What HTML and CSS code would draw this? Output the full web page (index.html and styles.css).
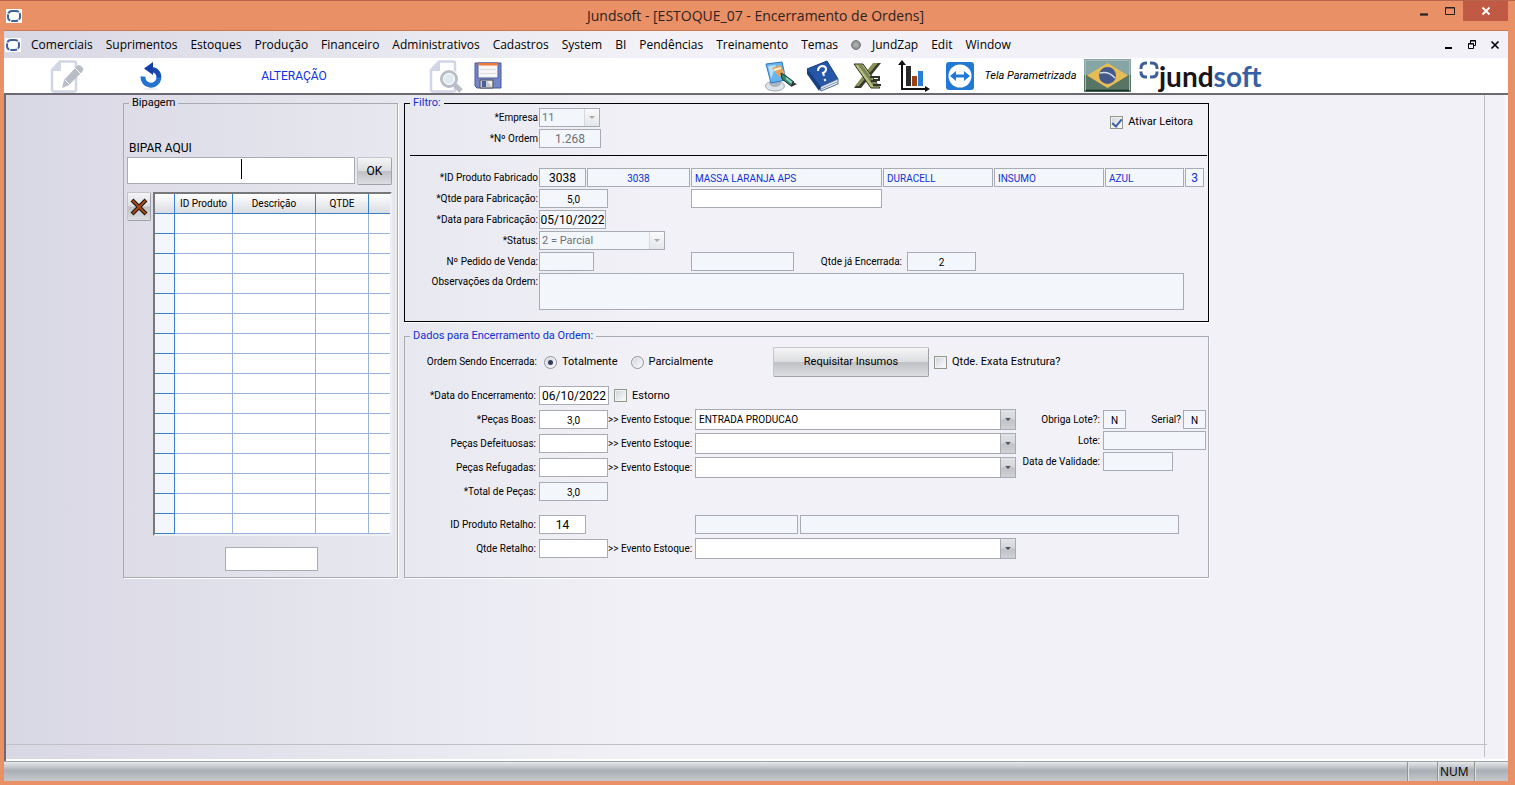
FILE: index.html
```html
<!DOCTYPE html>
<html lang="pt-BR">
<head>
<meta charset="utf-8">
<title>Jundsoft - [ESTOQUE_07 - Encerramento de Ordens]</title>
<link rel="stylesheet" href="styles.css">
</head>
<body>
<div class="window">
  <header class="titlebar">
    <svg class="app-icon" viewBox="0 0 16 14"><rect width="16" height="14" fill="#fff"/><rect x="2" y="2" width="12" height="10" rx="4" fill="none" stroke="#3d6199" stroke-width="2" stroke-dasharray="7 1"/></svg>
    <h1 class="title">Jundsoft - [ESTOQUE_07 - Encerramento de Ordens]</h1>
    <div class="window-buttons">
      <button class="win-btn" aria-label="Minimizar"><svg width="10" height="12"><path d="M1 9.500h8" stroke="#222" stroke-width="2.200"/></svg></button>
      <button class="win-btn" aria-label="Maximizar"><svg width="12" height="12"><path d="M1.500 2.500h9v7h-9zM1.500 3h9" fill="none" stroke="#222"/></svg></button>
      <button class="win-btn win-close" aria-label="Fechar"><svg width="10" height="10"><path d="M1.500 1.500l7 7m0-7l-7 7" stroke="#fff" stroke-width="1.800"/></svg></button>
    </div>
  </header>

  <nav class="menubar">
    <svg class="app-icon" viewBox="0 0 16 14"><rect width="16" height="14" fill="#fff"/><rect x="2" y="2" width="12" height="10" rx="4" fill="none" stroke="#3d6199" stroke-width="2" stroke-dasharray="7 1"/></svg>
    <div class="menu-items">
      <button class="menu">Comerciais</button>
      <button class="menu">Suprimentos</button>
      <button class="menu">Estoques</button>
      <button class="menu">Produção</button>
      <button class="menu">Financeiro</button>
      <button class="menu">Administrativos</button>
      <button class="menu">Cadastros</button>
      <button class="menu">System</button>
      <button class="menu">BI</button>
      <button class="menu">Pendências</button>
      <button class="menu">Treinamento</button>
      <button class="menu">Temas</button>
      <button class="menu menu-zap"><span class="dot"></span>JundZap</button>
      <button class="menu">Edit</button>
      <button class="menu">Window</button>
    </div>
    <div class="mdi-buttons">
      <button class="mdi-btn" aria-label="Minimizar janela"><svg width="10" height="10"><path d="M1 8h7" stroke="#000" stroke-width="2"/></svg></button>
      <button class="mdi-btn" aria-label="Restaurar janela"><svg width="10" height="10"><path d="M1.500 3.500h5v5h-5zM1 4h6M3.500 3V.5h5v5H7M3 1h6" fill="none" stroke="#000"/></svg></button>
      <button class="mdi-btn" aria-label="Fechar janela"><svg width="10" height="10"><path d="M1.500 1.500l7 7m0-7l-7 7" stroke="#000" stroke-width="1.600"/></svg></button>
    </div>
  </nav>

  <div class="toolbar">
    <button class="tool tool-edit" aria-label="Editar"><svg width="34" height="34" viewBox="0 0 34 34"><path d="M10 2.500h14q2 0 2 2v26q0 2-2 2H4q-2 0-2-2V11z" fill="#fff" stroke="#d1d6e7" stroke-width="2.500"/><path d="M2 12L11 2v10z" fill="#d1d6e7"/><path d="M27 7q2-2 4 0l2 2q1 2-1 4L19 26l-7 3 2-8z" fill="#b8bdc6"/><path d="M25 9l6 6M15 21l4 4" stroke="#fff"/></svg></button>
    <button class="tool tool-undo" aria-label="Desfazer"><svg width="24" height="30" viewBox="0 0 24 30"><path d="M4 15.500a8 8 0 1 0 10-7" fill="none" stroke="#2374cf" stroke-width="5"/><path d="M13 8.500q7 1 7 8" fill="none" stroke="#1b4cad" stroke-width="4.500"/><path d="M5 7.500L14 1v13z" fill="#173ea8"/><ellipse cx="12" cy="28" rx="8" ry="1" fill="#eee"/></svg></button>
    <span class="mode">ALTERAÇÃO</span>
    <button class="tool tool-search" aria-label="Pesquisar"><svg width="34" height="34" viewBox="0 0 34 34"><path d="M10 2.500h14q2 0 2 2v26q0 2-2 2H4q-2 0-2-2V11z" fill="#fff" stroke="#d1d6e7" stroke-width="2.500"/><path d="M2 12L11 2v10z" fill="#d1d6e7"/><circle cx="20" cy="20" r="10" fill="#fff"/><circle cx="20" cy="20" r="7.500" fill="#dfeaf1" stroke="#b8bdc6" stroke-width="3"/><circle cx="20" cy="20" r="5.500" fill="none" stroke="#fff"/><path d="M26 26l6 6" stroke="#b8bdc6" stroke-width="5"/></svg></button>
    <button class="tool tool-save" aria-label="Salvar"><svg width="28" height="30" viewBox="0 0 28 30"><path d="M1 2h26v25H3l-2-2z" fill="#7586c6" stroke="#44589e"/><path d="M4 2h20v15H4z" fill="#f6f6f6" stroke="#4c5c99"/><path d="M4.500 2h19v2.500h-19z" fill="#f07838"/><path d="M6 8.500h16M6 12.500h16" stroke="#ddd"/><path d="M6 19h13v8H6z" fill="#c5c9d2" stroke="#555"/><path d="M8 20h4v6H8z" fill="#4a5f9c"/><path d="M13 20l5 6v-6z" fill="#eee"/></svg></button>
    <button class="tool tool-login" aria-label="Usuário"><svg width="34" height="32" viewBox="0 0 34 32"><ellipse cx="11" cy="26" rx="9.500" ry="5" fill="#dfe3ea" stroke="#9ea8b5"/><ellipse cx="11" cy="23" rx="6" ry="4" fill="#aab5c4"/><path d="M2 4l16-2 4 18-15 3z" fill="#67b5ee" stroke="#2c75be"/><path d="M4 6l8-1-5 14z" fill="#b8e0fb"/><path d="M8 8l8-3 5 8-6 4z" fill="#e5a25f"/><path d="M10 10l7-2" stroke="#fff0c4" stroke-width="2"/><path d="M17 13l5 3 8 6-3 4-9-7z" fill="#3b8172" stroke="#173d38"/><path d="M22 18l6 5" stroke="#88d5bd" stroke-width="2"/><path d="M28 22l5 2-6 3z" fill="#333"/></svg></button>
    <button class="tool tool-help" aria-label="Ajuda"><svg width="34" height="34" viewBox="0 0 34 34"><path d="M1 10L21 2l11 18-18 8z" fill="#2556a9" stroke="#173d7c"/><path d="M14 28l18-8v5l-17 7z" fill="#e8ebf1" stroke="#507095"/><path d="M1 10v5l12 17 2-4z" fill="#173f82"/><path d="M15 30l16-7" stroke="#8095b0"/><path d="M12 12q0-4 4-5 4 0 4 3 0 3-3 4l1 3M18.500 20l1 2" fill="none" stroke="#fff" stroke-width="2"/></svg></button>
    <button class="tool tool-excel" aria-label="Exportar para Excel"><svg width="30" height="28" viewBox="0 0 30 28"><path d="M21 1h7L8 26H1z" fill="#35392a"/><path d="M20 1h5L6 24H2z" fill="#8a8e59"/><path d="M1 2h9l17 24h-9z" fill="#b9bd78" stroke="#292d20"/><path d="M5 3h4l16 22h-4z" fill="#77865a"/><path d="M17 15h9v3h-6M18 19h6M20 23h8" stroke="#30352a" stroke-width="2" fill="none"/></svg></button>
    <button class="tool tool-chart" aria-label="Gráficos"><svg width="32" height="32" viewBox="0 0 32 32"><path d="M4 3v26h25" fill="none" stroke="#111" stroke-width="2"/><path d="M0 5l4-5 4 5zM27 26l5 3-5 3z" fill="#111"/><path d="M8 6h5v20H8z" fill="#29292b"/><path d="M14 16h5v10h-5z" fill="#9c4217"/><path d="M20 11h5v15h-5z" fill="#2780d5"/></svg></button>
    <button class="tool tool-remote" aria-label="Acesso remoto"><svg width="28" height="28" viewBox="0 0 28 28"><rect width="28" height="28" rx="3" fill="#2279d3"/><circle cx="14" cy="14" r="11.500" fill="#fff"/><path d="M4 14l6-5v3.500h8V9l6 5-6 5v-3.500h-8V19z" fill="#2279d3"/></svg></button>
    <em class="param">Tela Parametrizada</em>
    <button class="tool tool-flag" aria-label="Português do Brasil"><svg width="47" height="33" viewBox="0 0 47 33"><rect width="47" height="33" fill="#587465"/><path d="M0 0h47v16H0z" fill="#86a5a4"/><path d="M1.500 31V1.500h44V31" fill="none" stroke="#a9b9b5"/><path d="M2 31.500h43" stroke="#142b20" stroke-width="1.500"/><path d="M3 16.500L23.500 4 44 16.500 23.500 29z" fill="#e6bd55"/><circle cx="23.500" cy="16.500" r="8.500" fill="#44598b"/><path d="M16 14q9-2 15 5" stroke="#d8dce8" stroke-width="1.500" fill="none"/></svg></button>
    <a class="logo" href="#"><svg width="20" height="20" viewBox="0 0 20 20"><path d="M2 8V7q0-5 5-5h1M11 2h2q5 0 5 5v1M18 10.500v1q0 4.500-5 4.500h-2M8 16H7q-5 0-5-4.500v-1" fill="none" stroke="#3c5f9b" stroke-width="3"/></svg><span class="brand">jund<span class="brand-soft">soft</span></span></a>
  </div>

  <main class="workspace">
    <div class="content">
      <fieldset class="panel scan">
        <legend>Bipagem</legend>
        <label class="scan-label" for="bip">BIPAR AQUI</label>
        <div class="scan-row">
          <span class="scan-field"><input id="bip" type="text"></span>
          <button class="btn">OK</button>
        </div>
        <div class="scan-list">
          <button class="btn btn-delete" aria-label="Excluir"><svg width="18" height="18" viewBox="0 0 18 18"><path d="M2 2l14 14M16 2L2 16" stroke="#1d120c" stroke-width="4"/><path d="M2.500 2.500l13 13M15.500 2.500l-13 13" stroke="#a34a17" stroke-width="2"/></svg></button>
          <div class="grid-frame">
            <table class="items">
              <colgroup><col class="c-mark"><col class="c-id"><col class="c-desc"><col class="c-qty"><col></colgroup>
              <thead><tr><th></th><th>ID Produto</th><th>Descrição</th><th>QTDE</th><th></th></tr></thead>
              <tbody>
                <tr><td></td><td></td><td></td><td></td><td></td></tr>
                <tr><td></td><td></td><td></td><td></td><td></td></tr>
                <tr><td></td><td></td><td></td><td></td><td></td></tr>
                <tr><td></td><td></td><td></td><td></td><td></td></tr>
                <tr><td></td><td></td><td></td><td></td><td></td></tr>
                <tr><td></td><td></td><td></td><td></td><td></td></tr>
                <tr><td></td><td></td><td></td><td></td><td></td></tr>
                <tr><td></td><td></td><td></td><td></td><td></td></tr>
                <tr><td></td><td></td><td></td><td></td><td></td></tr>
                <tr><td></td><td></td><td></td><td></td><td></td></tr>
                <tr><td></td><td></td><td></td><td></td><td></td></tr>
                <tr><td></td><td></td><td></td><td></td><td></td></tr>
                <tr><td></td><td></td><td></td><td></td><td></td></tr>
                <tr><td></td><td></td><td></td><td></td><td></td></tr>
                <tr><td></td><td></td><td></td><td></td><td></td></tr>
                <tr><td></td><td></td><td></td><td></td><td></td></tr>
              </tbody>
            </table>
          </div>
        </div>
        <input class="scan-total" type="text" aria-label="Total bipado">
      </fieldset>

      <div class="forms">
        <fieldset class="panel filter">
          <legend>Filtro:</legend>
          <div class="filter-top">
            <div class="rows">
              <div class="row"><label for="emp">*Empresa</label><span class="combo off w-s"><select id="emp" disabled><option>11</option></select></span></div>
              <div class="row"><label for="ord">*Nº Ordem</label><input id="ord" class="ro dim big w-s" value="1.268" readonly></div>
            </div>
            <label class="check reader"><input type="checkbox" checked>Ativar Leitora</label>
          </div>
          <hr>
          <div class="rows">
            <div class="row"><label for="pid">*ID Produto Fabricado</label>
              <div class="strip first"><input id="pid" class="ro big w-code" value="3038" readonly><input class="ro blue grow" value="3038" aria-label="Código" readonly></div>
              <div class="strip"><input class="ro blue start w-name" value="MASSA LARANJA APS" aria-label="Nome" readonly><input class="ro blue start w-group" value="DURACELL" aria-label="Marca" readonly><input class="ro blue start w-group" value="INSUMO" aria-label="Tipo" readonly><input class="ro blue start w-color" value="AZUL" aria-label="Cor" readonly><input class="ro blue big w-tiny" value="3" aria-label="Nível" readonly></div>
            </div>
            <div class="row"><label for="qf">*Qtde para Fabricação:</label><div class="strip first"><input id="qf" class="ro w-qty" value="5,0" readonly></div><input class="w-name" aria-label="Complemento"></div>
            <div class="row"><label for="df">*Data para Fabricação:</label><input id="df" class="ro big w-date" value="05/10/2022" readonly></div>
            <div class="row"><label for="st">*Status:</label><span class="combo off w-status"><select id="st" disabled><option>2 = Parcial</option></select></span></div>
            <div class="row"><label for="pv">Nº Pedido de Venda:</label><div class="strip first"><input id="pv" class="ro w-order" readonly></div><input class="ro w-ref" aria-label="Cliente" readonly><label class="closed" for="qe">Qtde já Encerrada:</label><input id="qe" class="ro w-qty" value="2" readonly></div>
            <div class="row top"><label for="obs">Observações da Ordem:</label><textarea id="obs" class="ro" readonly></textarea></div>
          </div>
        </fieldset>

        <fieldset class="panel closing">
          <legend>Dados para Encerramento da Ordem:</legend>
          <div class="row mode-row" role="radiogroup">
            <span class="row-label">Ordem Sendo Encerrada:</span>
            <label class="check"><input type="radio" name="enc" checked>Totalmente</label>
            <label class="check partial"><input type="radio" name="enc">Parcialmente</label>
            <button class="btn btn-req">Requisitar Insumos</button>
            <label class="check"><input type="checkbox">Qtde. Exata Estrutura?</label>
          </div>
          <div class="closing-body">
            <div class="rows tall">
              <div class="row"><label for="de">*Data do Encerramento:</label><input id="de" class="big w-date2" value="06/10/2022"><label class="check"><input type="checkbox">Estorno</label></div>
              <div class="row"><label for="pb">*Peças Boas:</label><input id="pb" class="w-qty" value="3,0"><label class="event" for="e1">&gt;&gt; Evento Estoque:</label><span class="combo"><select id="e1"><option>ENTRADA PRODUCAO</option></select></span></div>
              <div class="row"><label for="pd">Peças Defeituosas:</label><input id="pd" class="w-qty"><label class="event" for="e2">&gt;&gt; Evento Estoque:</label><span class="combo"><select id="e2"><option></option></select></span></div>
              <div class="row"><label for="pr">Peças Refugadas:</label><input id="pr" class="w-qty"><label class="event" for="e3">&gt;&gt; Evento Estoque:</label><span class="combo"><select id="e3"><option></option></select></span></div>
              <div class="row"><label for="tp">*Total de Peças:</label><input id="tp" class="ro w-qty" value="3,0" readonly></div>
            </div>
            <div class="lots">
              <div class="lot"><label for="ol">Obriga Lote?:</label><input id="ol" class="ro w-flag" value="N" readonly><label class="serial" for="se">Serial?</label><input id="se" class="ro w-flag" value="N" readonly></div>
              <div class="lot"><label for="lo">Lote:</label><input id="lo" class="ro w-ref" readonly></div>
              <div class="lot"><label for="dv">Data de Validade:</label><input id="dv" class="ro w-date2" readonly></div>
            </div>
          </div>
          <div class="rows tall scrap">
            <div class="row"><label for="ir">ID Produto Retalho:</label><div class="strip scrap-id"><input id="ir" class="big w-code" value="14"></div><input class="ro w-ref" aria-label="Código do retalho" readonly><input class="ro scrap-name" aria-label="Nome do retalho" readonly></div>
            <div class="row"><label for="qr">Qtde Retalho:</label><input id="qr" class="w-qty"><label class="event" for="e4">&gt;&gt; Evento Estoque:</label><span class="combo"><select id="e4"><option></option></select></span></div>
          </div>
        </fieldset>
      </div>
    </div>
  </main>

  <footer class="statusbar"><span class="cell cell-a"></span><span class="cell cell-num">NUM</span><span class="cell cell-b"></span></footer>
</div>
</body>
</html>
```
FILE: styles.css
```css
* { box-sizing: border-box; }
body {
  margin: 0;
  background: #e99066;
  color: #000;
  font: 10px/14px Roboto, "Liberation Sans", sans-serif;
}
button, input, select, textarea { font: inherit; color: inherit; margin: 0; }
button { padding: 0; border: 0; background: none; }
svg { display: block; }

.window {
  display: flex;
  flex-direction: column;
  min-height: 100vh;
  padding: 0 7px 4px 4px;
  border-top: 1px solid #b9654c;
}

/* title and menu */
.titlebar { display: flex; align-items: center; height: 30px; border-bottom: 1px solid #c87950; }
.app-icon { width: 16px; height: 14px; flex: none; }
.titlebar .app-icon { margin-left: 2px; }
.title { flex: 1; margin: 0; text-align: center; font: 14px/28px "Open Sans", sans-serif; color: #2f2220; padding-left: 78px; }
.window-buttons { display: flex; align-self: flex-start; }
.win-btn { width: 26px; height: 20px; display: grid; place-items: center; }
.win-close { width: 45px; background: #c05a45; }

.menubar { display: flex; align-items: center; height: 27px; background: linear-gradient(90deg, #d8d7e4, #e8e8f0 400px, #f2f1f7 650px); }
.menubar .app-icon { margin-left: 1px; }
.menu-items { display: flex; gap: 13px; margin-left: 10px; flex: 1; }
.menu { font: 12px/18px "Open Sans", sans-serif; white-space: nowrap; }
.menu-zap { display: flex; align-items: center; gap: 11px; }
.dot { width: 10px; height: 10px; border-radius: 5px; background: radial-gradient(#b5bbb5, #777d78); border: 1px solid #777; }
.mdi-buttons { display: flex; gap: 13px; margin-right: 8px; }

/* toolbar */
.toolbar { display: flex; align-items: center; height: 35px; background: #fff; }
.tool-edit { margin-left: 46px; }
.tool-undo { margin-left: 55px; }
.mode { width: 130px; margin-left: 66px; text-align: center; font-size: 12px; color: #1030e0; }
.tool-search { margin-left: 70px; }
.tool-save { margin-left: 11px; }
.tool-login { margin-left: 262px; }
.tool-help { margin-left: 8px; }
.tool-excel { margin-left: 13px; }
.tool-chart { margin-left: 15px; }
.tool-remote { margin-left: 16px; }
.param { width: 110px; padding-left: 3px; text-align: center; font-size: 11px; white-space: nowrap; }
.logo { display: flex; margin-left: 8px; text-decoration: none; color: #1a1419; align-items: flex-start; }
.brand { font: 28px/30px Lato, sans-serif; font-weight: 700; }
.brand-soft { color: #365fa4; }

/* workspace */
.workspace {
  flex: 1;
  border: solid #6c6a70;
  border-width: 2px 0 0 2px;
  background:
    linear-gradient(#bfbfc4, #bfbfc4) right 23px top 0 / 1px calc(100% - 4px) no-repeat,
    linear-gradient(#bfbfc4, #bfbfc4) 0 calc(100% - 16px) / calc(100% - 21px) 1px no-repeat,
    linear-gradient(90deg, #d8d7e4, #e8e8f0 400px, #f2f1f7 650px);
  box-shadow: inset 0 -2px #fff, inset -3px 0 #f9f9fb;
  padding: 1px 30px 32px 117px;
}
.content { display: flex; gap: 6px; align-items: stretch; max-width: 1086px; }
.panel { margin: 0; padding: 0; min-width: 0; border: 1px solid #a7abb4; box-shadow: 1px 1px #fff; }
.panel legend { height: 14px; margin-left: 5px; padding: 0 3px; font-size: 11px; color: #1030d0; }
.panel.scan legend { color: #000; }
.scan { flex: 0 0 275px; }
.forms { flex: 1; display: flex; flex-direction: column; gap: 7px; min-width: 0; }

input:not([type="checkbox"]):not([type="radio"]), textarea {
  height: 19px;
  border: 1px solid #a7abb4;
  border-radius: 0;
  background: #fff;
  padding: 2px 3px 0;
  text-align: center;
  outline: 0;
  flex: none;
}
input.ro.ro, textarea.ro { background: #f3f7fc; }
input.start.start { text-align: left; }
input.big.big { font-size: 12px; padding: 0; }
input.dim { color: #6d7278; }
input.blue { color: #1030d0; }

.btn {
  border: 1px solid #c3c5ca;
  border-right-color: #9fa1a6;
  border-bottom-color: #9fa1a6;
  border-radius: 2px;
  background: linear-gradient(#f5f5f6, #dddee1 48%, #bfc1c5 52%, #dcdde0);
  display: grid;
  place-items: center;
  font-size: 11px;
}

/* scan panel */
.scan-label { display: block; margin: 31px 0 2px 5px; font-size: 12px; line-height: 14px; }
.scan-row { display: flex; gap: 2px; padding: 0 5px 0 3px; }
.scan-field { position: relative; flex: 1; display: flex; }
.scan-field input#bip { width: 100%; height: 27px; flex: 1; }
.scan-field::after { content: ""; position: absolute; left: 114px; top: 2px; width: 1px; height: 20px; background: #000; }
.scan-row .btn { width: 35px; height: 28px; font-size: 12px; }
.scan-list { display: flex; gap: 2px; padding: 7px 5px 0 3px; align-items: flex-start; }
.btn-delete { width: 24px; height: 29px; }
.grid-frame { flex: 1; height: 344px; overflow: hidden; border: 2px solid #77787c; border-right-color: #f0f0f3; border-bottom-color: #f0f0f3; background: #fff; }
.items { width: 100%; table-layout: fixed; border-collapse: separate; border-spacing: 0; }
.c-mark { width: 20px; }
.c-id { width: 58px; }
.c-desc { width: 83px; }
.c-qty { width: 53px; }
.items th, .items td { height: 20px; padding: 0; border-right: 1px solid #9ab3dc; border-bottom: 1px solid #9ab3dc; }
.items th { font-weight: 400; border-color: #3a80cf; background: linear-gradient(#fff, #d9dce1); }
.items td:first-child { border-color: #3a80cf; background: #f3f7fc; }
.items th:last-child, .items td:last-child { border-right: 0; }
input.scan-total.scan-total { display: block; width: 93px; height: 24px; margin: 11px auto 6px 101px; }

/* form rows */
.rows { display: flex; flex-direction: column; gap: 2px; }
.row { display: flex; align-items: center; min-height: 19px; }
.row > label:first-child, .row-label { flex: 0 0 134px; padding-right: 1px; text-align: right; white-space: nowrap; }
.row.top { align-items: flex-start; }
.row.top > label { padding-top: 2px; }
.filter { border-color: #000; padding-bottom: 11px; }
.filter-top { display: flex; justify-content: space-between; align-items: flex-start; padding-right: 15px; margin-top: -2px; }
.reader { margin-top: 7px; }
.filter hr { margin: 7px 1px 12px 5px; border: 0; border-top: 1px solid #000; }
.strip { display: flex; gap: 1px; }
.strip.first { flex: 0 0 151px; width: 151px; min-width: 0; margin-right: 1px; }
input.grow.grow.grow { flex: 1; width: 0; min-width: 0; }
.w-s { width: 62px; }
.w-code { width: 47px; }
.w-name { width: 191px; }
.w-group { width: 110px; }
.w-color { width: 79px; }
.w-tiny { width: 19px; }
.w-qty { width: 69px; }
.w-date { width: 67px; }
.w-date2 { width: 70px; }
.w-status { width: 126px; }
.w-order { width: 55px; }
.w-ref { width: 103px; }
.w-flag { width: 23px; }
.closed { width: 113px; padding-right: 5px; text-align: right; }
textarea#obs { width: 645px; height: 37px; resize: none; display: block; }

.combo { position: relative; display: flex; flex: none; width: 321px; height: 21px; }
.combo.off { height: 19px; }
.combo.w-s { width: 61px; }
.combo.w-status { width: 126px; }
.combo select { appearance: none; width: 100%; border: 1px solid #a7abb4; border-radius: 0; background: #fff; padding: 0 18px 0 3px; outline: 0; opacity: 1; }
.combo.off select { background: #f3f7fc; color: #6d7278; padding-left: 2px; font-size: 11px; }
.combo::before { content: ""; position: absolute; right: 1px; top: 1px; bottom: 1px; width: 14px; border-left: 1px solid #a7abb4; background: linear-gradient(#e3e4e7, #d3d5da 48%, #bfc1c7 52%, #d0d2d6); pointer-events: none; }
.combo::after { content: ""; position: absolute; right: 5px; top: 9px; border: 3px solid transparent; border-top-color: #555; border-bottom: 0; pointer-events: none; }
.combo.off::before { background: linear-gradient(#fafafb, #e4e6ea); border-color: #d5d7db; }
.combo.off::after { border-top-color: #aaa; top: 8px; }

/* tick boxes and radios */
.check { display: flex; align-items: center; gap: 5px; white-space: nowrap; font-size: 11px; }
.check input { appearance: none; width: 13px; height: 13px; flex: none; display: grid; place-items: center; border: 1px solid #8f9a8c; background: linear-gradient(135deg, #cdd0d8, #fff); box-shadow: inset 0 0 0 1px #f2f2f2; }
.check input[type="radio"] { border-radius: 7px; border-color: #90949a; }
.check input[type="radio"]:checked::before { content: ""; width: 5px; height: 5px; border-radius: 3px; background: #333d5c; }
.check input[type="checkbox"]:checked::before { content: ""; width: 4px; height: 8px; border: solid #3c62a4; border-width: 0 2px 2px 0; transform: rotate(40deg); }

/* closing panel */
.closing { flex: 1; }
.mode-row { height: 30px; margin-top: 4px; }
.mode-row .row-label { margin-right: 5px; padding-right: 2px; }
.partial { margin-left: 13px; }
.btn-req { width: 156px; height: 30px; margin: 0 5px 0 auto; }
.mode-row .check:last-child { width: 274px; }
.closing-body { display: flex; margin-top: 8px; }
.rows.tall { gap: 3px; }
.tall .row { height: 21px; }
.tall .row > label:first-child { padding-right: 3px; }
.tall .check { margin-left: 5px; }
.event { width: 87px; padding-right: 3px; text-align: right; white-space: nowrap; }
.lots { flex: 1; display: flex; flex-direction: column; gap: 2px; padding: 25px 2px 0 0; }
.lot { display: flex; align-items: center; }
.lot label:first-child { width: 87px; padding-right: 3px; text-align: right; white-space: nowrap; }
.lot .serial { flex: 1; text-align: right; padding-right: 2px; }
.scrap { margin-top: 12px; }
.scrap-id { flex: 0 0 156px; }
.scrap-name { width: 379px; margin-left: 2px; }

/* status bar */
.statusbar { display: flex; justify-content: flex-end; height: 20px; border-top: 1px solid #9fa3aa; background: linear-gradient(#e8eaec, #a9aeb5 45%, #c6c7ca); }
.cell { border-left: 1px solid #8f9690; box-shadow: inset 1px 0 #dfe1e3; font: 12px/20px "Open Sans", sans-serif; padding-left: 2px; }
.cell-a { width: 30px; }
.cell-num { width: 37px; }
.cell-b { width: 34px; }
```
